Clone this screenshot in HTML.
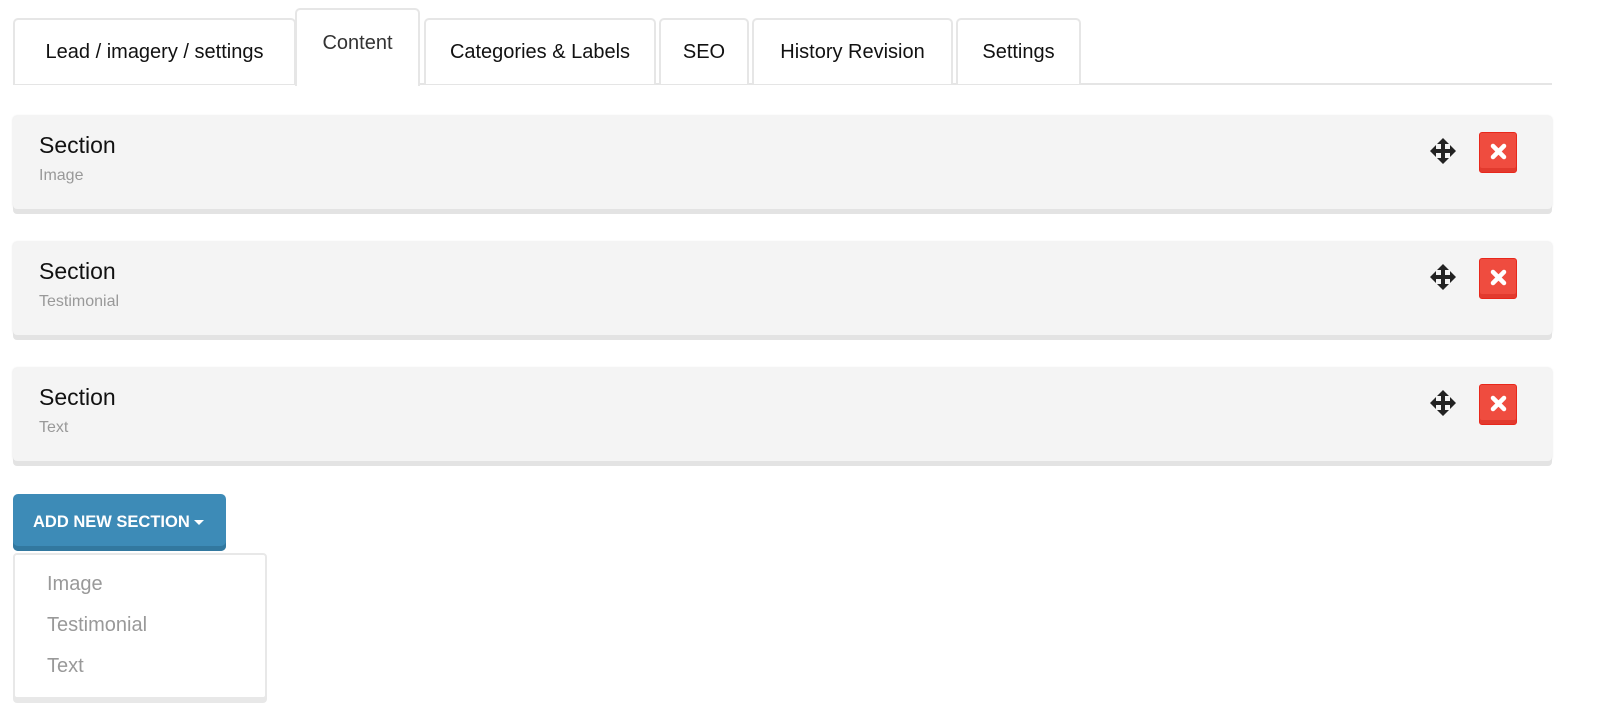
<!DOCTYPE html>
<html><head><meta charset="utf-8"><style>
*{box-sizing:border-box;margin:0;padding:0}
body{width:1600px;height:721px;background:#fff;font-family:"Liberation Sans",sans-serif;position:relative;overflow:hidden;color:#222}
.tabline{position:absolute;left:13px;top:83px;width:1539px;height:2px;background:#e5e5e5}
.tab{position:absolute;top:18px;height:66px;border:2px solid #e6e6e6;border-bottom:none;border-radius:5px 5px 0 0;background:#fff;font-size:20px;line-height:64px;text-align:center;color:#111}
.tab.active{top:8px;height:78px;line-height:66px;color:#333;z-index:2}
.panel{position:absolute;left:13px;width:1539px;height:93px;background:#f4f4f4;border-radius:4px;box-shadow:0 5px 0 #e3e3e3,0 0 2px #ddd}
.panel .t{position:absolute;left:26px;top:16px;font-size:23px;color:#111}
.panel .s{position:absolute;left:26px;top:51px;font-size:16px;color:#999}
.mv{position:absolute;left:1417px;top:22px}
.x{position:absolute;left:1466px;top:16px;width:38px;height:41px;background:#ef4c3f;border:1px solid #e8271b;border-radius:3px;box-shadow:inset 0 -4px 0 #e23a2e}
.btn{position:absolute;left:13px;top:494px;width:213px;height:57px;background:#3d8bb7;border-radius:5px;box-shadow:inset 0 -5px 0 #32789f;color:#fff;font-weight:bold;font-size:16.5px;line-height:56px;padding-left:20px}
.dd{position:absolute;left:13px;top:553px;width:254px;height:146px;border:2px solid #e8e8e8;border-radius:4px;background:#fff;box-shadow:0 4px 0 #e8e8e8}
.dd div{position:absolute;left:32px;font-size:20px;color:#999}
</style></head><body>
<div class="tabline"></div>
<div class="tab" style="left:13px;width:283px">Lead / imagery / settings</div>
<div class="tab active" style="left:295px;width:125px">Content</div>
<div class="tab" style="left:424px;width:232px">Categories &amp; Labels</div>
<div class="tab" style="left:659px;width:90px">SEO</div>
<div class="tab" style="left:752px;width:201px">History Revision</div>
<div class="tab" style="left:956px;width:125px">Settings</div>

<div class="panel" style="top:116px"><div class="t">Section</div><div class="s">Image</div>
<svg class="mv" width="26" height="26" viewBox="0 0 26 26"><path fill="#222" d="M13 0l6 6h-4v5h5V7l6 6-6 6v-4h-5v5h4l-6 6-6-6h4v-5H6v4l-6-6 6-6v4h5V6H7z"/></svg>
<div class="x"><svg width="38" height="38" viewBox="0 0 38 38"><path d="M13 13l11 11M24 13L13 24" stroke="#fff" stroke-width="4.5" stroke-linecap="round"/></svg></div></div>
<div class="panel" style="top:242px"><div class="t">Section</div><div class="s">Testimonial</div>
<svg class="mv" width="26" height="26" viewBox="0 0 26 26"><path fill="#222" d="M13 0l6 6h-4v5h5V7l6 6-6 6v-4h-5v5h4l-6 6-6-6h4v-5H6v4l-6-6 6-6v4h5V6H7z"/></svg>
<div class="x"><svg width="38" height="38" viewBox="0 0 38 38"><path d="M13 13l11 11M24 13L13 24" stroke="#fff" stroke-width="4.5" stroke-linecap="round"/></svg></div></div>
<div class="panel" style="top:368px"><div class="t">Section</div><div class="s">Text</div>
<svg class="mv" width="26" height="26" viewBox="0 0 26 26"><path fill="#222" d="M13 0l6 6h-4v5h5V7l6 6-6 6v-4h-5v5h4l-6 6-6-6h4v-5H6v4l-6-6 6-6v4h5V6H7z"/></svg>
<div class="x"><svg width="38" height="38" viewBox="0 0 38 38"><path d="M13 13l11 11M24 13L13 24" stroke="#fff" stroke-width="4.5" stroke-linecap="round"/></svg></div></div>

<div class="btn">ADD NEW SECTION <span style="display:inline-block;width:0;height:0;border-left:5px solid transparent;border-right:5px solid transparent;border-top:5px solid #fff;vertical-align:middle"></span></div>
<div class="dd"><div style="top:18px">Image</div><div style="top:59px">Testimonial</div><div style="top:100px">Text</div></div>
</body></html>
